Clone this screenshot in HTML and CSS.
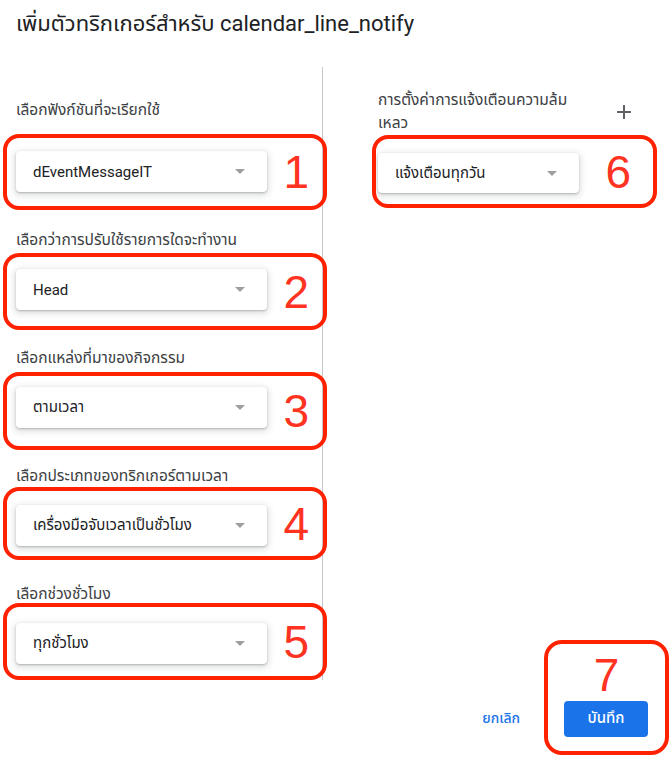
FILE: index.html
```html
<!DOCTYPE html>
<html lang="th">
<head>
<meta charset="utf-8">
<title>เพิ่มตัวทริกเกอร์</title>
<link rel="stylesheet" href="styles.css">
</head>
<body>
<div class="page">
  <h1 class="title">เพิ่มตัวทริกเกอร์สำหรับ calendar_line_notify</h1>
  <div class="columns">
    <div class="col-left">
      <div class="field first">
        <div class="label">เลือกฟังก์ชันที่จะเรียกใช้</div>
        <div class="select"><span>dEventMessageIT</span><i class="arrow"></i></div>
      </div>
      <div class="field">
        <div class="label">เลือกว่าการปรับใช้รายการใดจะทำงาน</div>
        <div class="select"><span>Head</span><i class="arrow"></i></div>
      </div>
      <div class="field">
        <div class="label">เลือกแหล่งที่มาของกิจกรรม</div>
        <div class="select"><span>ตามเวลา</span><i class="arrow"></i></div>
      </div>
      <div class="field">
        <div class="label">เลือกประเภทของทริกเกอร์ตามเวลา</div>
        <div class="select"><span>เครื่องมือจับเวลาเป็นชั่วโมง</span><i class="arrow"></i></div>
      </div>
      <div class="field">
        <div class="label">เลือกช่วงชั่วโมง</div>
        <div class="select"><span>ทุกชั่วโมง</span><i class="arrow"></i></div>
      </div>
    </div>
    <div class="col-right">
      <div class="right-head">
        <div class="label-2">การตั้งค่าการแจ้งเตือนความล้ม<br>เหลว</div>
        <button class="plus" aria-label="เพิ่ม">
          <svg width="14" height="14" viewBox="0 0 14 14"><path d="M7 0v14M0 7h14" stroke="#5f6368" stroke-width="2" fill="none"/></svg>
        </button>
      </div>
      <div class="select narrow"><span>แจ้งเตือนทุกวัน</span><i class="arrow"></i></div>
    </div>
  </div>
  <div class="footer">
    <button class="btn-cancel">ยกเลิก</button>
    <button class="btn-save">บันทึก</button>
  </div>

  <div class="annot a1"><span class="num">1</span></div>
  <div class="annot a2"><span class="num">2</span></div>
  <div class="annot a3"><span class="num">3</span></div>
  <div class="annot a4"><span class="num">4</span></div>
  <div class="annot a5"><span class="num">5</span></div>
  <div class="annot a6"><span class="num">6</span></div>
  <div class="annot a7"><span class="num">7</span></div>
</div>
</body>
</html>
```
FILE: styles.css
```css
* { box-sizing: border-box; }
html, body { margin: 0; padding: 0; background: #fff; }
body {
  font-family: Roboto, "Noto Sans", "Noto Sans Thai", "Liberation Sans", sans-serif;
  color: #202124;
}
.page {
  position: relative;
  width: 670px;
  height: 758px;
  overflow: hidden;
}
.title {
  margin: 0;
  padding: 12px 16px 0;
  font-size: 22px;
  line-height: 24px;
  font-weight: 400;
  color: #202124;
  height: 67px;
  white-space: nowrap;
}
.columns {
  display: flex;
  height: 613px;
}
.col-left {
  width: 323px;
  border-right: 1px solid #c6c6cc;
  padding: 33px 0 0 16px;
  display: flex;
  flex-direction: column;
  gap: 38px;
}
.field { display: flex; flex-direction: column; }
.label {
  font-size: 15.5px;
  line-height: 20px;
  color: #3c4043;
  margin-bottom: 19px;
  white-space: nowrap;
}
.field.first .label { margin-bottom: 31px; }
.select {
  width: 251px;
  height: 41px;
  background: #fff;
  border-radius: 4px;
  box-shadow: 0 1px 2px rgba(60,64,67,.3), 0 2px 6px 2px rgba(60,64,67,.15);
  display: flex;
  align-items: center;
  justify-content: space-between;
  padding: 0 22px 0 17px;
  font-size: 15px;
  color: #202124;
  white-space: nowrap;
}
.select.narrow { width: 201px; height: 40px; }
.arrow {
  width: 0;
  height: 0;
  border-left: 5px solid transparent;
  border-right: 5px solid transparent;
  border-top: 5px solid #9e9e9e;
}
.col-right {
  flex: 1;
  padding: 22px 34px 0 55px;
}
.right-head {
  display: flex;
  align-items: center;
  justify-content: space-between;
  margin-bottom: 18px;
}
.label-2 {
  font-size: 15.5px;
  line-height: 23px;
  color: #3c4043;
  white-space: nowrap;
}
.plus {
  width: 24px;
  height: 24px;
  padding: 0;
  border: 0;
  background: none;
  display: flex;
  align-items: center;
  justify-content: center;
}
.footer {
  display: flex;
  justify-content: flex-end;
  align-items: center;
  padding: 20px 22px 0 0;
}
.btn-cancel {
  border: 0;
  background: none;
  font-family: inherit;
  font-size: 14px;
  font-weight: 500;
  color: #1a73e8;
  padding: 8px;
  margin-right: 36px;
}
.btn-save {
  width: 84px;
  height: 36px;
  border: 0;
  border-radius: 4px;
  background: #1a73e8;
  color: #fff;
  font-family: inherit;
  font-size: 15px;
  font-weight: 500;
}

/* red annotation overlays */
.annot {
  position: absolute;
  border: 4px solid #ff2200;
  border-radius: 16px;
  display: flex;
  align-items: center;
  justify-content: flex-end;
  padding-right: 14px;
}
.num {
  font-family: "Liberation Sans", Arial, sans-serif;
  font-size: 46px;
  line-height: 1;
  color: #ff3322;
}
.a1 { left: 3px; top: 134px; width: 324px; height: 76px; }
.a2 { left: 3px; top: 253px; width: 324px; height: 77px; }
.a3 { left: 3px; top: 372px; width: 324px; height: 78px; }
.a4 { left: 3px; top: 487px; width: 324px; height: 73px; }
.a5 { left: 3px; top: 603px; width: 324px; height: 77px; }
.a6 { left: 372px; top: 135px; width: 285px; height: 73px; padding-right: 22px; }
.a7 {
  left: 544px; top: 640px; width: 125px; height: 115px;
  border-radius: 18px;
  justify-content: center;
  align-items: flex-start;
  padding: 8px 0 0;
}
```
